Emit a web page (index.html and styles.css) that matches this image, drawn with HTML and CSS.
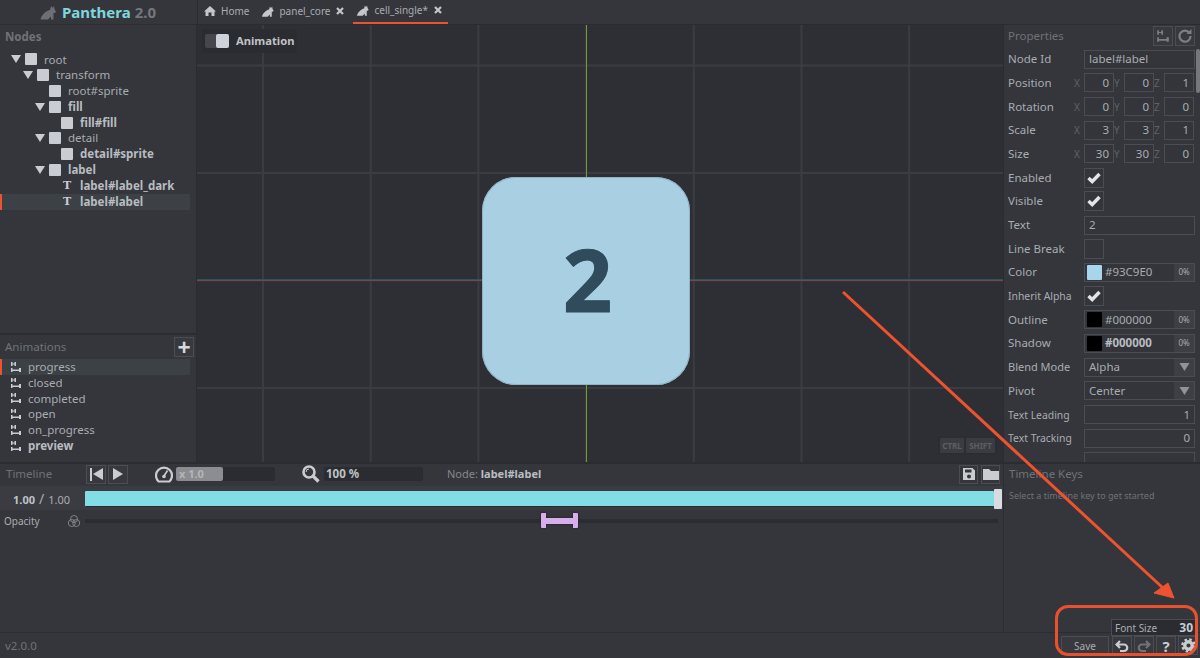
FILE: index.html
```html
<!DOCTYPE html>
<html lang="en">
<head>
  <meta charset="UTF-8">
  <title>Panthera 2.0</title>
  <link rel="stylesheet" href="styles.css">
</head>
<body>
  <svg class="defs" width="0" height="0">
    <symbol id="i-cat" viewBox="0 0 16 16"><path d="M0 15.5 C0.5 12.5 2 11 3.5 9.5 C5 7.5 7.5 6.5 9.5 6 L10.5 2 L11.5 3.5 L12.5 3.5 L13.5 2 L14 5 L15.5 8 L14 9 L13 9 L13 15.5 L10.5 15.5 L10.5 12.5 L7.5 15.5 Z" fill="currentColor"/></symbol>
    <symbol id="i-home" viewBox="0 0 12 12"><path d="M6 1 L12 6.5 L10.5 6.5 L10.5 11 L7.5 11 L7.5 7.5 L4.5 7.5 L4.5 11 L1.5 11 L1.5 6.5 L0 6.5 Z" fill="currentColor"/></symbol>
    <symbol id="i-x" viewBox="0 0 8 8"><path d="M1 1 L7 7 M7 1 L1 7" stroke="currentColor" stroke-width="2.2"/></symbol>
    <symbol id="i-down" viewBox="0 0 10 8"><path d="M0 0 H10 L5 8 Z" fill="currentColor"/></symbol>
    <symbol id="i-anim" viewBox="0 0 10 12"><path d="M0 1 H1.5 V2.5 H3.5 V1 H5 V5 H3.5 V3.5 H1.5 V5 H0 Z M0 7 H1.5 V8.5 H8 V7 H10 V11 H8 V10 H1.5 V11 H0 Z" fill="currentColor"/></symbol>
    <symbol id="i-check" viewBox="0 0 14 12"><path d="M1.5 6 L5.2 9.5 L12.5 2" fill="none" stroke="currentColor" stroke-width="3.4"/></symbol>
    <symbol id="i-save" viewBox="0 0 12 12"><path d="M0 0 H9.5 L12 2.5 V12 H0 Z M2 1.5 V4.5 H8.5 V1.5 Z M6 6.5 A2 2 0 1 0 6 10.5 A2 2 0 1 0 6 6.5 Z" fill="currentColor" fill-rule="evenodd"/></symbol>
    <symbol id="i-folder" viewBox="0 0 16 12"><path d="M0 1 H6 L8 3 H16 V12 H0 Z" fill="currentColor"/></symbol>
    <symbol id="i-undo" viewBox="0 0 14 14"><path d="M5 2 L1.5 5.5 L5 9 M2 5.5 H9 A3 3 0 0 1 9 12 H5" fill="none" stroke="currentColor" stroke-width="2.2"/></symbol>
    <symbol id="i-gear" viewBox="0 0 16 16"><circle cx="8" cy="8" r="4" fill="none" stroke="currentColor" stroke-width="3.6"/><circle cx="8" cy="8" r="6.6" fill="none" stroke="currentColor" stroke-width="2.4" stroke-dasharray="2.8 2.38"/></symbol>
    <symbol id="i-refresh" viewBox="0 0 14 14"><path d="M11.5 4 A5.5 5.5 0 1 0 12.5 7" fill="none" stroke="currentColor" stroke-width="2.2"/><path d="M8.5 5 H13.5 V0 Z" fill="currentColor"/></symbol>
    <symbol id="i-speed" viewBox="0 0 18 18"><path d="M3.5 16.5 A8 8 0 1 1 14.5 16.5 Z" fill="none" stroke="currentColor" stroke-width="2.2"/><path d="M9 11 L12.5 5.5" stroke="currentColor" stroke-width="1.6"/><circle cx="9" cy="11.5" r="1.8" fill="currentColor"/></symbol>
    <symbol id="i-zoom" viewBox="0 0 18 18"><circle cx="7" cy="7" r="5.5" fill="none" stroke="currentColor" stroke-width="2.6"/><path d="M11 11 L16.5 16.5" stroke="currentColor" stroke-width="3.2"/><path d="M4 7 A3 3 0 0 1 7 4" fill="none" stroke="currentColor" stroke-width="1"/></symbol>
    <symbol id="i-blend" viewBox="0 0 14 14"><g fill="none" stroke="currentColor" stroke-width="1"><circle cx="7" cy="5" r="3.5"/><circle cx="4.8" cy="9" r="3.5"/><circle cx="9.2" cy="9" r="3.5"/></g></symbol>
  </svg>

  <header class="topbar">
    <div class="logo">
      <svg class="logo-cat"><use href="#i-cat"/></svg>
      <span class="logo-name">Panthera</span>
      <span class="logo-ver">2.0</span>
    </div>
    <nav class="tabs">
      <div class="tab"><svg class="ico-12"><use href="#i-home"/></svg>Home</div>
      <div class="tab"><svg class="ico-12"><use href="#i-cat"/></svg>panel_core<svg class="ico-x"><use href="#i-x"/></svg></div>
      <div class="tab active"><svg class="ico-12"><use href="#i-cat"/></svg>cell_single*<svg class="ico-x"><use href="#i-x"/></svg></div>
    </nav>
  </header>

  <div class="workspace">
    <aside class="left">
      <section class="nodes">
        <div class="panel-title">Nodes</div>
        <div class="tree">
          <div class="row lvl-0"><svg class="arrow"><use href="#i-down"/></svg><i class="sq"></i><span>root</span></div>
          <div class="row lvl-1"><svg class="arrow"><use href="#i-down"/></svg><i class="sq"></i><span>transform</span></div>
          <div class="row lvl-2"><b class="noarrow"></b><i class="sq"></i><span>root#sprite</span></div>
          <div class="row lvl-2"><svg class="arrow"><use href="#i-down"/></svg><i class="sq"></i><span class="bold">fill</span></div>
          <div class="row lvl-3"><b class="noarrow"></b><i class="sq"></i><span class="bold">fill#fill</span></div>
          <div class="row lvl-2"><svg class="arrow"><use href="#i-down"/></svg><i class="sq"></i><span>detail</span></div>
          <div class="row lvl-3"><b class="noarrow"></b><i class="sq"></i><span class="bold">detail#sprite</span></div>
          <div class="row lvl-2"><svg class="arrow"><use href="#i-down"/></svg><i class="sq"></i><span class="bold">label</span></div>
          <div class="row lvl-3"><b class="noarrow"></b><i class="t-ico">T</i><span class="bold">label#label_dark</span></div>
          <div class="row lvl-3 selected"><b class="noarrow"></b><i class="t-ico">T</i><span class="bold">label#label</span></div>
        </div>
      </section>
      <section class="anims">
        <div class="anims-head">
          <div class="panel-title">Animations</div>
          <div class="btn btn-plus">+</div>
        </div>
        <div class="row anim selected"><svg class="anim-ico"><use href="#i-anim"/></svg><span>progress</span></div>
        <div class="row anim"><svg class="anim-ico"><use href="#i-anim"/></svg><span>closed</span></div>
        <div class="row anim"><svg class="anim-ico"><use href="#i-anim"/></svg><span>completed</span></div>
        <div class="row anim"><svg class="anim-ico"><use href="#i-anim"/></svg><span>open</span></div>
        <div class="row anim"><svg class="anim-ico"><use href="#i-anim"/></svg><span>on_progress</span></div>
        <div class="row anim"><svg class="anim-ico"><use href="#i-anim"/></svg><span class="bold">preview</span></div>
      </section>
    </aside>

    <main class="canvas">
      <div class="axis axis-x"></div>
      <div class="axis axis-y"></div>
      <div class="card">2</div>
      <div class="anim-toggle">
        <div class="toggle"><i></i></div>
        <span>Animation</span>
      </div>
      <div class="keys-hint"><span class="key-ctrl">CTRL</span><span class="key-shift">SHIFT</span></div>
    </main>

    <aside class="props">
      <div class="props-head">
        <div class="panel-title">Properties</div>
        <div class="btn btn-sq"><svg class="ico-14"><use href="#i-anim"/></svg></div>
        <div class="btn btn-sq"><svg class="ico-14"><use href="#i-refresh"/></svg></div>
      </div>
      <div class="prop"><label>Node Id</label><div class="field">label#label</div></div>
      <div class="prop"><label>Position</label><div class="xyz"><em>X</em><div class="field num">0</div><em>Y</em><div class="field num">0</div><em>Z</em><div class="field num">1</div></div></div>
      <div class="prop"><label>Rotation</label><div class="xyz"><em>X</em><div class="field num">0</div><em>Y</em><div class="field num">0</div><em>Z</em><div class="field num">0</div></div></div>
      <div class="prop"><label>Scale</label><div class="xyz"><em>X</em><div class="field num">3</div><em>Y</em><div class="field num">3</div><em>Z</em><div class="field num">1</div></div></div>
      <div class="prop"><label>Size</label><div class="xyz"><em>X</em><div class="field num">30</div><em>Y</em><div class="field num">30</div><em>Z</em><div class="field num">0</div></div></div>
      <div class="prop"><label>Enabled</label><div class="check"><svg><use href="#i-check"/></svg></div></div>
      <div class="prop"><label>Visible</label><div class="check"><svg><use href="#i-check"/></svg></div></div>
      <div class="prop"><label>Text</label><div class="field">2</div></div>
      <div class="prop"><label>Line Break</label><div class="check"></div></div>
      <div class="prop"><label>Color</label><div class="field colorf"><i class="swatch swatch-blue"></i><span>#93C9E0</span><small>0%</small></div></div>
      <div class="prop"><label class="tight">Inherit Alpha</label><div class="check"><svg><use href="#i-check"/></svg></div></div>
      <div class="prop"><label>Outline</label><div class="field colorf"><i class="swatch"></i><span>#000000</span><small>0%</small></div></div>
      <div class="prop"><label>Shadow</label><div class="field colorf"><i class="swatch"></i><span class="bold">#000000</span><small>0%</small></div></div>
      <div class="prop"><label class="tight-md">Blend Mode</label><div class="field selectf"><span>Alpha</span><small><svg><use href="#i-down"/></svg></small></div></div>
      <div class="prop"><label>Pivot</label><div class="field selectf"><span>Center</span><small><svg><use href="#i-down"/></svg></small></div></div>
      <div class="prop"><label class="tight">Text Leading</label><div class="field num">1</div></div>
      <div class="prop"><label class="tight">Text Tracking</label><div class="field num">0</div></div>
      <div class="prop"><label></label><div class="field"></div></div>
      <div class="scrollbar"></div>
    </aside>
  </div>

  <div class="bottom">
    <section class="timeline">
      <div class="tl-head">
        <div class="panel-title tl-title">Timeline</div>
        <div class="btn btn-tl"><i class="first-bar"></i><i class="tri tri-left"></i></div>
        <div class="btn btn-tl"><i class="tri"></i></div>
        <svg class="ico-18 speed-ico"><use href="#i-speed"/></svg>
        <div class="slider"><div class="slider-fill">x 1.0</div></div>
        <svg class="ico-18 zoom-ico"><use href="#i-zoom"/></svg>
        <div class="slider"><div class="slider-val">100 %</div></div>
        <div class="node-name">Node: <b>label#label</b></div>
        <div class="btn btn-file"><svg class="ico-12"><use href="#i-save"/></svg></div>
        <div class="btn btn-file"><svg class="ico-folder"><use href="#i-folder"/></svg></div>
      </div>
      <div class="tl-row">
        <div class="tl-time"><b>1.00</b><span class="slash">/</span>1.00</div>
        <div class="tl-bar"></div>
        <div class="tl-handle"></div>
      </div>
      <div class="tl-track">
        <div class="track-name">Opacity</div>
        <svg class="ico-14 blend-ico"><use href="#i-blend"/></svg>
        <div class="track-line"><div class="key"></div></div>
      </div>
    </section>
    <section class="keys">
      <div class="panel-title">Timeline Keys</div>
      <p>Select a timeline key to get started</p>
    </section>
  </div>

  <footer class="footer">
    <div class="version">v2.0.0</div>
    <div class="footer-tools">
      <div class="font-size"><span>Font Size</span><b>30</b></div>
      <div class="tool-row">
        <div class="btn btn-save">Save</div>
        <div class="btn btn-tool"><svg class="ico-14"><use href="#i-undo"/></svg></div>
        <div class="btn btn-tool dim"><svg class="ico-14 flip"><use href="#i-undo"/></svg></div>
        <div class="btn btn-tool q">?</div>
        <div class="btn btn-tool"><svg class="ico-15"><use href="#i-gear"/></svg></div>
      </div>
    </div>
  </footer>

  <!-- annotation drawn on top of the screenshot -->
  <svg class="arrow-note" viewBox="0 0 1200 658">
    <path d="M843 292 L1163 588" stroke="#ee5330" stroke-width="3"/>
    <path d="M1154 593 L1168 583 L1174 598 Z" fill="#ee5330" stroke="#ee5330" stroke-width="1"/>
  </svg>
  <div class="ring-note"></div>
</body>
</html>
```

FILE: styles.css
```css
* {
  box-sizing: border-box;
}

html, body {
  margin: 0;
  height: 100%;
}

body {
  position: relative;
  width: 1200px;
  height: 658px;
  overflow: hidden;
  display: flex;
  flex-direction: column;
  background: #34363c;
  color: #a9acb0;
  font-family: "Noto Sans", "Open Sans", sans-serif;
  font-size: 11.5px;
  line-height: 16px;
}

.defs {
  position: absolute;
}

.bold {
  font-weight: 700;
  color: #b9bcc0;
}

svg {
  display: block;
  flex: none;
}

.ico-12 { width: 12px; height: 12px; }
.ico-14 { width: 14px; height: 14px; }
.ico-15 { width: 15px; height: 15px; }
.ico-18 { width: 18px; height: 18px; }
.ico-x { width: 8px; height: 8px; }
.ico-folder { width: 16px; height: 12px; }

/* top bar */
.topbar {
  height: 25px;
  flex: none;
  display: flex;
  background: #34363c;
  border-bottom: 1px solid #2a2c30;
}

.logo {
  width: 198px;
  padding-left: 40px;
  display: flex;
  align-items: center;
  gap: 4px;
  border-right: 1px solid #2a2c30;
  font-size: 15px;
  font-weight: 700;
}

.logo-cat {
  width: 17px;
  height: 16px;
  margin-right: 1px;
  color: #6d6f74;
}

.logo-name {
  color: #7fd6dd;
}

.logo-ver {
  color: #75777c;
}

.tabs {
  display: flex;
  padding-left: 6px;
}

.tab {
  display: flex;
  align-items: center;
  gap: 5px;
  height: 24px;
  padding: 0 0 2px 0;
  margin-right: 13px;
  font-size: 10px;
  color: #a9acb0;
}

.tab svg:first-child {
  color: #c4c6cb;
}

.tab .ico-x {
  margin-left: 1px;
  color: #c4c6cb;
}

.tab.active {
  margin-left: -4px;
  padding: 0 6px 2px 4px;
  border-bottom: 2px solid #ee5330;
}

/* main area */
.workspace {
  height: 437px;
  flex: none;
  display: flex;
}

.left {
  width: 197px;
  flex: none;
  display: flex;
  flex-direction: column;
  border-right: 1px solid #2a2c30;
}

.panel-title {
  color: #6f7277;
  font-size: 11.5px;
}

.nodes {
  height: 310px;
  flex: none;
  padding-top: 4px;
  border-bottom: 2px solid #2a2c30;
}

.nodes .panel-title {
  padding-left: 5px;
  font-weight: 700;
  margin-bottom: 6.6px;
}

.row {
  display: flex;
  align-items: center;
  height: 15.8px;
  margin-right: 6px;
  border-left: 2px solid transparent;
  white-space: nowrap;
}

.row.selected {
  background: #3b4145;
  border-left-color: #ee5330;
}

.lvl-0 { padding-left: 9px; }
.lvl-1 { padding-left: 21px; }
.lvl-2 { padding-left: 33px; }
.lvl-3 { padding-left: 45px; }

.arrow, .noarrow {
  display: block;
  width: 10px;
  height: 8px;
  margin-right: 4px;
  color: #c9ccd1;
}

.sq, .t-ico {
  display: block;
  width: 12px;
  height: 12px;
  margin-right: 7px;
  flex: none;
}

.sq {
  background: #c9ccd3;
  border-radius: 1px;
}

.t-ico {
  font-family: "DejaVu Serif", serif;
  font-style: normal;
  font-weight: 700;
  font-size: 11px;
  line-height: 12px;
  text-align: center;
  color: #c9ccd3;
}

.anims {
  flex: 1;
  padding-top: 2px;
}

.anims-head {
  display: flex;
  align-items: center;
  justify-content: space-between;
  height: 20px;
  padding: 0 2px 0 5px;
  margin-bottom: 2px;
}

.btn {
  display: flex;
  align-items: center;
  justify-content: center;
  flex: none;
  border: 1px solid #4b4d52;
  background: #37393e;
  color: #c9ccd1;
}

.btn-plus {
  width: 20px;
  height: 20px;
  font-size: 23px;
  font-weight: 700;
  line-height: 18px;
  color: #d6d8dc;
}

.anim {
  padding-left: 9px;
}

.anim-ico {
  width: 10px;
  height: 12px;
  margin-right: 7px;
  color: #c9ccd1;
}

/* canvas */
.canvas {
  position: relative;
  flex: 1;
  background-color: #2d2f34;
  background-image:
    linear-gradient(to right, #3a3c41 1.5px, transparent 1.5px),
    linear-gradient(to bottom, #3a3c41 1.5px, transparent 1.5px);
  background-size: 107.7px 107.5px;
  background-position: 65px 39.5px;
}

.axis {
  position: absolute;
}

.axis-x {
  left: 0;
  right: 0;
  top: 254px;
  height: 2px;
  background: linear-gradient(to bottom, #24585f 50%, #7c4349 50%);
}

.axis-y {
  top: 0;
  bottom: 0;
  left: 388.5px;
  width: 1px;
  background: #6f9e30;
}

.card {
  position: absolute;
  left: 285px;
  top: 152px;
  width: 208px;
  height: 208px;
  padding-left: 3px;
  border-radius: 34px;
  background: #a9cfe3;
  color: #2f4b5c;
  font-family: "Open Sans", "Noto Sans", sans-serif;
  font-size: 86px;
  font-weight: 700;
  line-height: 204px;
  text-align: center;
  -webkit-text-stroke: 1px #2f4b5c;
  box-shadow: inset 0 0 0 1px #8fb2c6;
}

.anim-toggle {
  position: absolute;
  left: 5px;
  top: 4px;
  height: 24px;
  width: 95px;
  padding-left: 3px;
  display: flex;
  align-items: center;
  gap: 7px;
  background: #2a2c31;
  border-radius: 2px;
  font-weight: 700;
  font-size: 11.2px;
  color: #c0c3c7;
}

.toggle {
  width: 24px;
  height: 14px;
  display: flex;
  justify-content: flex-end;
  background: #45474d;
  border-radius: 2px;
}

.toggle i {
  display: block;
  width: 13px;
  height: 14px;
  background: #cfd2d8;
  border-radius: 2px;
}

.keys-hint {
  position: absolute;
  left: 741px;
  top: 411px;
  display: flex;
  gap: 2px;
  padding: 2px;
  background: #2b2d32;
  border-radius: 2px;
}

.keys-hint span {
  height: 15px;
  background: #3a3c41;
  color: #5c5f64;
  font-size: 8px;
  font-weight: 700;
  line-height: 15px;
  text-align: center;
  border-radius: 1px;
}

.key-ctrl { width: 24px; }
.key-shift { width: 29px; }

/* properties */
.props {
  position: relative;
  width: 197px;
  flex: none;
  padding: 0 5px 0 4px;
  border-left: 1px solid #2a2c30;
  overflow: hidden;
}

.props-head {
  display: flex;
  align-items: center;
  gap: 2px;
  height: 22.4px;
}

.props-head .panel-title {
  flex: 1;
}

.btn-sq {
  width: 20px;
  height: 20px;
  color: #7b7e83;
}

.prop {
  display: flex;
  align-items: center;
  height: 23.7px;
  white-space: nowrap;
}

.prop label {
  width: 76px;
  flex: none;
}

.prop label.tight {
  font-size: 10.4px;
}

.prop label.tight-md {
  font-size: 11px;
}

.field {
  display: flex;
  align-items: center;
  width: 111px;
  height: 19px;
  padding: 0 4px;
  background: #33353a;
  border: 1px solid #4b4d52;
  color: #a9acb0;
}

.num {
  justify-content: flex-end;
}

.xyz {
  display: flex;
  align-items: center;
  margin-left: -10px;
}

.xyz em {
  width: 10px;
  font-style: normal;
  font-size: 10px;
  color: #5f6267;
}

.xyz .field {
  width: 30px;
}

.check {
  display: flex;
  align-items: center;
  justify-content: center;
  width: 20px;
  height: 20px;
  border: 1px solid #4b4d52;
  background: #33353a;
  color: #e2e4e8;
}

.check svg {
  width: 14px;
  height: 12px;
}

.colorf {
  padding: 0 0 0 2px;
}

.colorf span, .selectf span {
  flex: 1;
}

.selectf {
  padding: 0 0 0 4px;
}

.colorf small, .selectf small {
  display: flex;
  align-items: center;
  justify-content: center;
  height: 100%;
  width: 20px;
  background: #3d3f45;
  font-size: 8px;
}

.selectf small svg {
  width: 11px;
  height: 8px;
  color: #909398;
}

.swatch {
  display: block;
  width: 15px;
  height: 15px;
  margin-right: 3px;
  background: #000;
  border-radius: 1px;
}

.swatch-blue {
  background: #a9d5ec;
}

.scrollbar {
  position: absolute;
  right: 0;
  top: 24px;
  width: 4px;
  height: 44px;
  background: #75777c;
  border-radius: 2px;
}

/* timeline */
.bottom {
  height: 170px;
  flex: none;
  display: flex;
  border-top: 2px solid #2a2c30;
}

.timeline {
  flex: 1;
  min-width: 0;
}

.tl-head {
  display: flex;
  align-items: center;
  height: 22px;
  padding: 0 0 2px 6px;
}

.tl-title {
  width: 80px;
}

.btn-tl {
  width: 20px;
  height: 19px;
  margin-right: 2px;
  gap: 1px;
}

.first-bar {
  display: block;
  width: 2px;
  height: 13px;
  background: #c9ccd1;
}

.tri {
  display: block;
  width: 0;
  height: 0;
  border-left: 10px solid #c9ccd1;
  border-top: 6px solid transparent;
  border-bottom: 6px solid transparent;
}

.tri-left {
  border-left: 0;
  border-right: 10px solid #c9ccd1;
}

.speed-ico {
  margin-left: 25px;
  margin-right: 3px;
  color: #c9ccd1;
}

.zoom-ico {
  margin-left: 27px;
  margin-right: 4px;
  color: #c9ccd1;
}

.slider {
  width: 99px;
  height: 14px;
  background: #2a2c31;
  border-radius: 2px;
}

.slider-fill {
  width: 47px;
  height: 14px;
  padding-left: 3px;
  background: #8b8d91;
  border-radius: 2px;
  color: #b4b6ba;
  font-size: 11px;
  font-weight: 700;
  line-height: 14px;
}

.slider-val {
  padding-left: 2px;
  color: #c0c3c7;
  font-size: 11.5px;
  font-weight: 700;
  line-height: 14px;
}

.node-name {
  margin-left: 24px;
  flex: 1;
  color: #84878c;
  font-size: 11px;
}

.node-name b {
  color: #b9bcc0;
}

.btn-file {
  width: 19px;
  height: 19px;
  margin-right: 3px;
  background: #34363c;
}

.tl-row {
  display: flex;
  align-items: center;
  height: 24px;
  padding-top: 2px;
  background: #3a3c41;
}

.tl-time {
  width: 85px;
  flex: none;
  padding-left: 13px;
  color: #a9acb0;
  font-size: 11px;
}

.tl-time b {
  color: #c0c3c7;
}

.slash {
  margin: 0 4px;
  font-size: 14px;
}

.tl-bar {
  width: 909px;
  height: 16px;
  flex: none;
  background: #82dde4;
  border-radius: 1px;
  border-bottom: 1px solid #2a2c30;
}

.tl-handle {
  width: 8px;
  height: 20px;
  flex: none;
  background: #d8dbe2;
  border-radius: 1px;
}

.tl-track {
  display: flex;
  align-items: center;
  height: 22px;
  padding-left: 4px;
}

.track-name {
  width: 63px;
  font-size: 10px;
}

.blend-ico {
  color: #7f8287;
  margin-right: 4px;
}

.track-line {
  position: relative;
  width: 913px;
  height: 4px;
  background: #2a2c31;
}

.key {
  position: absolute;
  left: 456px;
  top: -6px;
  width: 37px;
  height: 15px;
  background: linear-gradient(#d7aeeb, #d7aeeb) center / 100% 6px no-repeat;
  border-left: 5px solid #d7aeeb;
  border-right: 5px solid #d7aeeb;
  border-radius: 1px;
  filter: drop-shadow(0 0 1px #1c1d20);
}

.keys {
  width: 197px;
  flex: none;
  padding: 2px 5px;
  border-left: 1px solid #2a2c30;
}

.keys p {
  margin: 6px 0 0;
  color: #6f7277;
  font-size: 9px;
}

/* footer */
.footer {
  flex: 1;
  position: relative;
  display: flex;
  align-items: center;
  padding-left: 5px;
  border-top: 1px solid #2a2c30;
  background: #34363c;
}

.version {
  color: #6f7277;
  padding-top: 1px;
}

.footer-tools {
  position: absolute;
  right: 2px;
  bottom: 3px;
  display: flex;
  flex-direction: column;
  align-items: flex-end;
}

.font-size {
  width: 85px;
  height: 17px;
  margin-right: 2px;
  display: flex;
  justify-content: space-between;
  align-items: center;
  padding: 0 2px 0 3px;
  background: #2a2c31;
  border: 1px solid #4b4d52;
  font-size: 10px;
}

.font-size b {
  font-size: 12px;
  color: #c9ccd1;
}

.tool-row {
  display: flex;
  gap: 2px;
}

.btn-save {
  width: 48px;
  height: 19px;
  margin-right: 1px;
  font-size: 10px;
  color: #a9acb0;
}

.btn-tool {
  width: 20px;
  height: 19px;
}

.dim {
  color: #6f7277;
}

.flip {
  transform: scaleX(-1);
}

.q {
  font-size: 15px;
  font-weight: 700;
}

/* annotation */
.arrow-note {
  position: absolute;
  left: 0;
  top: 0;
  width: 1200px;
  height: 658px;
  pointer-events: none;
}

.ring-note {
  position: absolute;
  left: 1055px;
  top: 605px;
  width: 143px;
  height: 51px;
  border: 3px solid #e9512d;
  border-radius: 13px;
}
```
